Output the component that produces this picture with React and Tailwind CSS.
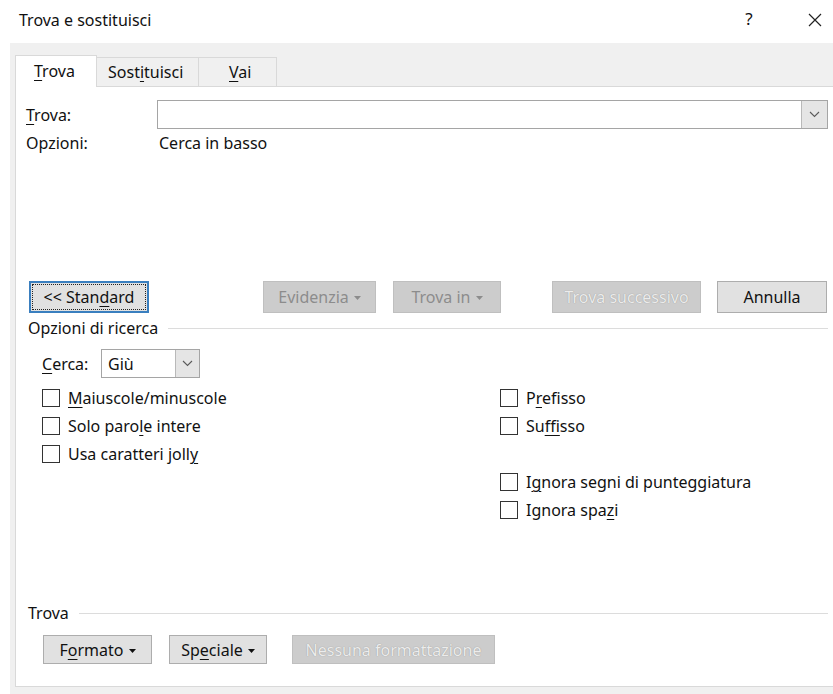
import React from "react";

const U = ({ children }) => (
  <span className="underline decoration-1 underline-offset-[3px]">{children}</span>
);

const Chevron = () => (
  <svg width="11" height="7" viewBox="0 0 11 7" fill="none">
    <polyline points="1,1 5.5,5.5 10,1" stroke="#5a5a5a" strokeWidth="1.1" />
  </svg>
);

const Caret = () => (
  <svg width="7" height="4" viewBox="0 0 7 4" className="ml-[5px] mt-[2px]">
    <polygon points="0,0 7,0 3.5,4" fill="currentColor" />
  </svg>
);

const Check = ({ children }) => (
  <div className="h-[28px] flex items-center">
    <span className="w-[18px] h-[18px] border border-[#333] bg-white shrink-0" />
    <span className="ml-[8px]">{children}</span>
  </div>
);

const Btn = ({ children, w, cls = "" }) => (
  <div
    className={`h-[32px] flex items-center justify-center border border-[#adadad] bg-[#e1e1e1] ${cls}`}
    style={{ width: w }}
  >
    {children}
  </div>
);

const DimBtn = ({ children, w, cls = "" }) => (
  <div
    className={`h-[32px] flex items-center justify-center border border-[#bfbfbf] bg-[#cccccc] text-[#8c8c8c] ${cls}`}
    style={{ width: w }}
  >
    {children}
  </div>
);

const GhostBtn = ({ children, w, cls = "" }) => (
  <div
    className={`h-[32px] flex items-center justify-center border border-[#bfbfbf] bg-[#cccccc] text-[#ececec] [text-shadow:0_0_1px_#8a8a8a] ${cls}`}
    style={{ width: w }}
  >
    {children}
  </div>
);

export default function App() {
  return (
    <div className="w-[833px] h-[694px] overflow-hidden bg-white text-[16px] leading-[20px] text-[#111] font-['Noto_Sans',sans-serif]">
      {/* title bar */}
      <div className="h-[43px] flex items-center pl-[19px] pr-[11px]">
        <span className="mb-[4px]">Trova e sostituisci</span>
        <span className="flex-1" />
        <span className="w-[20px] text-center text-[17px] mb-[6px]">?</span>
        <span className="ml-[49px] mb-[4px]">
          <svg width="14" height="14" viewBox="0 0 14 14">
            <path d="M1 1 L13 13 M13 1 L1 13" stroke="#222" strokeWidth="1.2" />
          </svg>
        </span>
      </div>

      {/* dialog body */}
      <div className="ml-[10px] w-[838px] h-[651px] bg-[#f0f0f0] pl-[5px] pt-[12px] pb-[7px] flex flex-col">
        {/* tabs */}
        <div className="flex items-end h-[32px] -mb-px relative z-10">
          <div className="w-[82px] h-[32px] bg-white border-t border-l border-r border-[#d9d9d9] flex items-center pl-[18px] pb-[2px]">
            <span><U>T</U>rova</span>
          </div>
          <div className="w-[102px] h-[30px] border-t border-r border-[#d9d9d9] flex items-center pl-[11px] pb-[1px]">
            <span>Sost<U>i</U>tuisci</span>
          </div>
          <div className="w-[78px] h-[30px] border-t border-r border-[#d9d9d9] flex items-center pl-[30px] pb-[1px]">
            <span><U>V</U>ai</span>
          </div>
        </div>

        {/* panel */}
        <div className="w-[824px] flex-1 bg-white border border-[#d9d9d9] pl-[10px] pr-[10px] flex flex-col">
          {/* find field */}
          <div className="mt-[13px] flex items-center h-[29px]">
            <span className="w-[131px]"><U>T</U>rova:</span>
            <div className="flex-1 h-[29px] border border-[#a5a5a5] bg-white flex justify-end">
              <div className="w-[26px] h-full bg-[#e5e5e5] border-l border-[#b9b9b9] flex items-center justify-center">
                <Chevron />
              </div>
            </div>
          </div>
          <div className="mt-[4px] h-[20px] flex items-center">
            <span className="w-[133px]">Opzioni:</span>
            <span>Cerca in basso</span>
          </div>

          {/* action buttons */}
          <div className="mt-[128px] flex items-center">
            <div className="ml-[3px] w-[120px] h-[32px] border-2 border-[#3a7fbf] bg-[#e1e1e1] p-px">
              <div className="w-full h-full border border-dotted border-[#222] flex items-center justify-center">
                <span>&lt;&lt; Stan<U>d</U>ard</span>
              </div>
            </div>
            <DimBtn w="113px" cls="ml-[114px]">
              Evidenzia <Caret />
            </DimBtn>
            <DimBtn w="108px" cls="ml-[17px]">
              Trova in <Caret />
            </DimBtn>
            <GhostBtn w="149px" cls="ml-[51px]">Trova successivo</GhostBtn>
            <Btn w="110px" cls="ml-[16px]">Annulla</Btn>
          </div>

          {/* search options */}
          <div className="mt-[5px] h-[20px] flex items-center pl-[2px]">
            <span>Opzioni di ricerca</span>
            <span className="flex-1 h-px bg-[#dcdcdc] ml-[10px]" />
          </div>

          <div className="mt-[11px] flex">
            <div className="ml-[16px] w-[458px] flex flex-col">
              <div className="h-[29px] flex items-center">
                <span className="w-[59px]"><U>C</U>erca:</span>
                <div className="w-[99px] h-[29px] border border-[#a5a5a5] flex items-center">
                  <span className="flex-1 pl-[6px]">Giù</span>
                  <div className="w-[24px] h-full bg-[#e5e5e5] border-l border-[#b9b9b9] flex items-center justify-center">
                    <Chevron />
                  </div>
                </div>
              </div>
              <div className="mt-[6px]">
                <Check><U>M</U>aiuscole/minuscole</Check>
                <Check>Solo paro<U>l</U>e intere</Check>
                <Check>Usa caratteri joll<U>y</U></Check>
              </div>
            </div>
            <div className="mt-[35px] flex flex-col">
              <Check>P<U>r</U>efisso</Check>
              <Check>Su<U>f</U>fisso</Check>
              <div className="h-[28px]" />
              <Check>I<U>g</U>nora segni di punteggiatura</Check>
              <Check>Ignora spa<U>z</U>i</Check>
            </div>
          </div>

          {/* format group */}
          <div className="mt-auto h-[20px] flex items-center pl-[2px]">
            <span>Trova</span>
            <span className="flex-1 h-px bg-[#dcdcdc] ml-[10px]" />
          </div>
          <div className="mt-[12px] mb-[22px] flex items-center">
            <Btn w="109px" cls="ml-[17px] !h-[29px]">
              F<U>o</U>rmato <Caret />
            </Btn>
            <Btn w="98px" cls="ml-[17px] !h-[29px]">
              Sp<U>e</U>ciale <Caret />
            </Btn>
            <GhostBtn w="203px" cls="ml-[25px] !h-[29px]">Nessuna formattazione</GhostBtn>
          </div>
        </div>
      </div>
    </div>
  );
}
